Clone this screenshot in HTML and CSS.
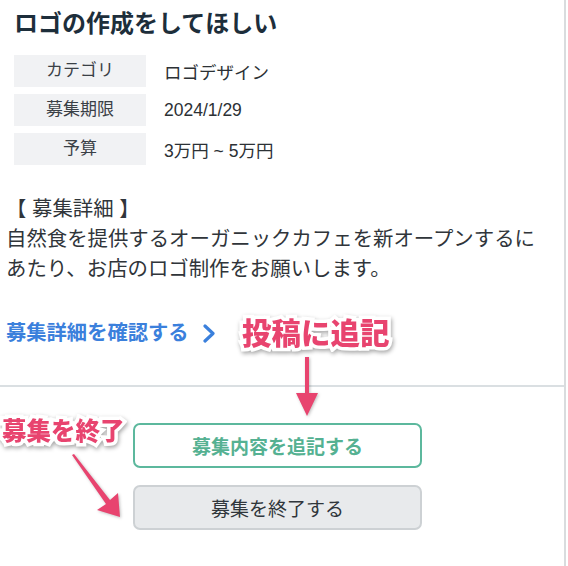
FILE: index.html
```html
<!DOCTYPE html>
<html lang="ja">
<head>
<meta charset="utf-8">
<link rel="stylesheet" href="styles.css">
</head>
<body>
<div class="page">
  <div class="content">
    <h1 class="title">ロゴの作成をしてほしい</h1>
    <div class="spec">
      <div class="spec-row"><div class="spec-label">カテゴリ</div><div class="spec-value">ロゴデザイン</div></div>
      <div class="spec-row"><div class="spec-label">募集期限</div><div class="spec-value">2024/1/29</div></div>
      <div class="spec-row"><div class="spec-label">予算</div><div class="spec-value">3万円 ~ 5万円</div></div>
    </div>
    <div class="detail">
      <div class="detail-head">【 募集詳細 】</div>
      <p class="detail-body">自然食を提供するオーガニックカフェを新オープンするにあたり、お店のロゴ制作をお願いします。</p>
    </div>
    <a class="more-link">募集詳細を確認する<svg class="chev" width="12" height="19" viewBox="0 0 12 19"><polyline points="2,2 10,9.5 2,17" fill="none" stroke="#3b80dc" stroke-width="3.2" stroke-linecap="round" stroke-linejoin="round"/></svg></a>
  </div>
  <div class="divider"></div>
  <div class="actions">
    <button class="btn btn-append">募集内容を追記する</button>
    <button class="btn btn-close">募集を終了する</button>
  </div>

  <div class="note note-append">投稿に追記</div>
  <svg class="arrow arrow-append" width="30" height="66" viewBox="0 0 30 66">
    <polygon points="13,0 17,0 17,36 26,36 15,59 4,36 13,36" fill="#e8446f"/>
  </svg>
  <div class="note note-close">募集を終了</div>
  <svg class="arrow arrow-close" width="60" height="70" viewBox="0 0 60 70">
    <polygon points="1,2 3,1 39,47 47,40 49,64 26,57 35,51" fill="#e8446f"/>
  </svg>
</div>
</body>
</html>
```

FILE: styles.css
```css
html, body {
  margin: 0;
  padding: 0;
  background: #ffffff;
}

body {
  font-family: "Liberation Sans", "Noto Sans CJK JP", sans-serif;
  color: #2f3438;
}

.page {
  position: relative;
  width: 564px;
  min-height: 566px;
  border-right: 2px solid #d9dcde;
}

.content {
  padding: 8px 22px 0 6px;
}

.title {
  margin: 0;
  padding-left: 8px;
  font-size: 24px;
  line-height: 32px;
  font-weight: 700;
  color: #1d2e3b;
}

.spec {
  margin-top: 15px;
  padding-left: 8px;
  display: flex;
  flex-direction: column;
  gap: 7px;
}

.spec-row {
  display: flex;
  align-items: center;
  height: 32px;
}

.spec-label {
  width: 132px;
  height: 32px;
  line-height: 32px;
  text-align: center;
  background: #f1f2f4;
  font-size: 17px;
  color: #3a4046;
}

.spec-value {
  margin-left: 18px;
  font-size: 17.5px;
  color: #2c3135;
}

.detail {
  margin-top: 29px;
  font-size: 20.4px;
  line-height: 30px;
  color: #30353a;
}

.detail-head {
  margin: 0;
}

.detail-body {
  margin: 0;
}

.more-link {
  display: flex;
  align-items: center;
  gap: 14px;
  margin-top: 34px;
  font-size: 20.3px;
  line-height: 30px;
  font-weight: 700;
  color: #3b80dc;
  text-decoration: none;
}

.chev {
  display: block;
}

.divider {
  margin-top: 37px;
  height: 2px;
  background: #dadfe2;
}

.actions {
  padding: 36px 0 0 133px;
  display: flex;
  flex-direction: column;
  gap: 17px;
}

.btn {
  width: 289px;
  height: 45px;
  border-radius: 7px;
  font-family: "Liberation Sans", "Noto Sans CJK JP", sans-serif;
  font-size: 19px;
  padding: 0;
  cursor: pointer;
}

.btn-append {
  background: #ffffff;
  border: 2px solid #5cb89d;
  color: #55b192;
  font-weight: 700;
}

.btn-close {
  background: #e8eaec;
  border: 2px solid #cdd1d4;
  color: #30363b;
  font-weight: 400;
}

.note {
  position: absolute;
  font-weight: 900;
  color: #e8446f;
  -webkit-text-stroke: 7px #ffffff;
  paint-order: stroke fill;
  filter: drop-shadow(1px 2px 2px rgba(0, 0, 0, 0.35));
  white-space: nowrap;
}

.note-append {
  left: 242px;
  top: 314px;
  font-size: 29.5px;
  line-height: 40px;
}

.note-close {
  left: 2px;
  top: 415px;
  font-size: 24.5px;
  line-height: 34px;
}

.arrow {
  position: absolute;
  filter: drop-shadow(1px 1px 1.5px rgba(0, 0, 0, 0.25));
}

.arrow-append {
  left: 292px;
  top: 357px;
}

.arrow-close {
  left: 71px;
  top: 453px;
}
```
